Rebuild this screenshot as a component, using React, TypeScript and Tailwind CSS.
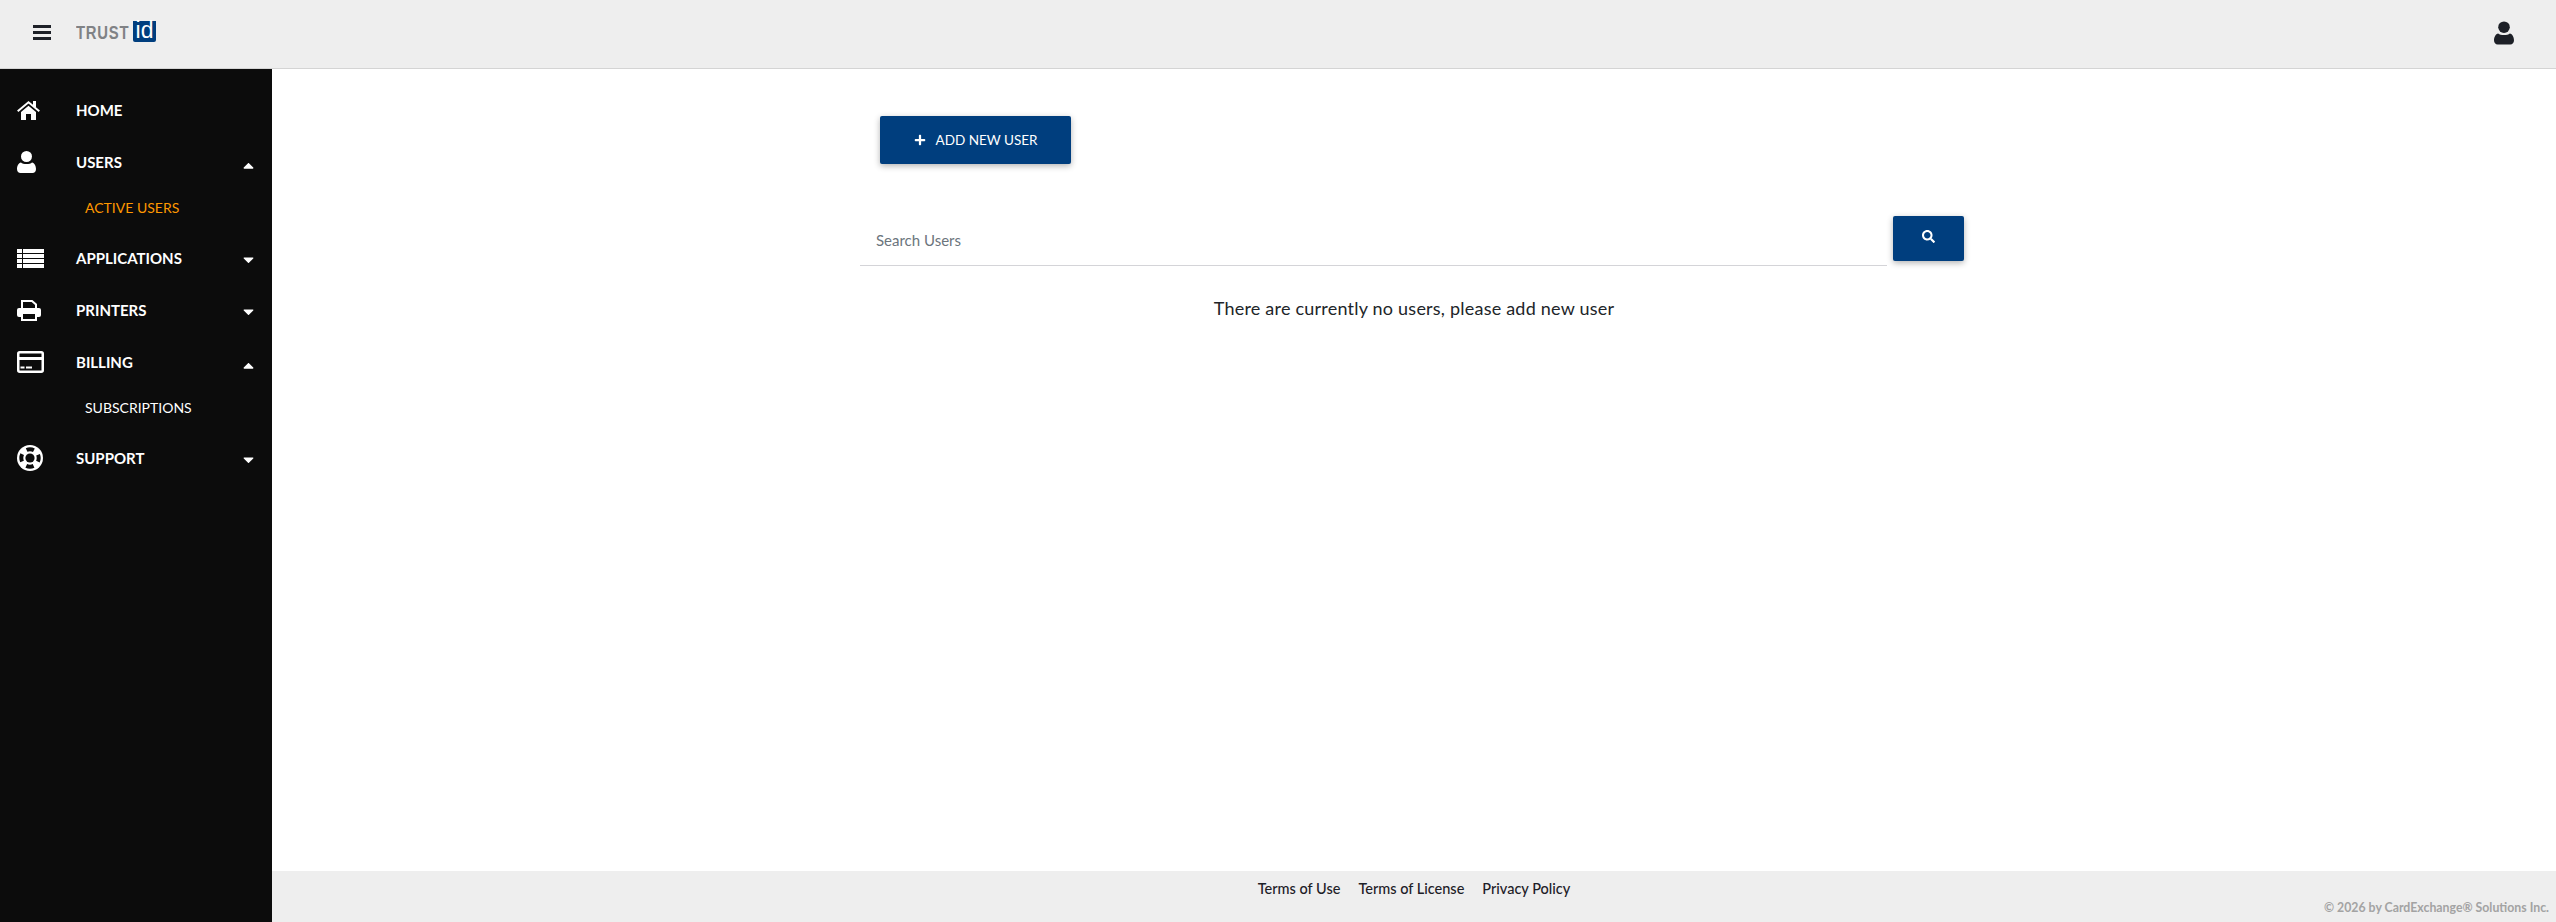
import { FaPlus, FaSearch, FaCaretDown, FaCaretUp } from "react-icons/fa";
import type { ReactNode } from "react";

function MenuIcon() {
    return (
        <svg width="18" height="15" viewBox="0 0 18 15" fill="#1d2027">
            <rect y="0" width="18" height="3" />
            <rect y="6" width="18" height="3" />
            <rect y="12" width="18" height="3" />
        </svg>
    );
}

function UserIcon({ w, h, color }: { w: number; h: number; color: string }) {
    return (
        <svg width={w} height={h} viewBox="0 0 19 22" fill={color}>
            <circle cx="9.5" cy="5.5" r="5.5" />
            <path d="M4 11.5C6 13.5 13 13.5 15 11.5C17.5 12 19 15 19 18C19 20.5 17.5 22 15.5 22H3.5C1.5 22 0 20.5 0 18C0 15 1.5 12 4 11.5Z" />
        </svg>
    );
}

function HomeIcon() {
    return (
        <svg width="23" height="19" viewBox="0 0 23 19" fill="white">
            <rect x="16" y="0" width="3" height="6" />
            <path d="M0.7 10.2L11.5 1.3L22.3 10.2" fill="none" stroke="white" strokeWidth="2" />
            <path d="M4 11L11.5 4.8L19 11V19H14V13H9V19H4Z" />
        </svg>
    );
}

function ListIcon() {
    return (
        <svg width="27" height="21" viewBox="0 0 27 21" fill="white">
            <rect x="0" y="1" width="5" height="4" />
            <rect x="6" y="1" width="21" height="4" />
            <rect x="0" y="6" width="5" height="4" />
            <rect x="6" y="6" width="21" height="4" />
            <rect x="0" y="11" width="5" height="4" />
            <rect x="6" y="11" width="21" height="4" />
            <rect x="0" y="16" width="5" height="4" />
            <rect x="6" y="16" width="21" height="4" />
        </svg>
    );
}

function PrinterIcon() {
    return (
        <svg width="24" height="21" viewBox="0 0 24 21">
            <path d="M5 9V1H15L19 4.5V9" fill="none" stroke="white" strokeWidth="2" />
            <rect x="0" y="8" width="24" height="9" rx="2" fill="white" />
            <rect x="5" y="13" width="14" height="7" fill="#0c0c0c" stroke="white" strokeWidth="2" />
        </svg>
    );
}

function CardIcon() {
    return (
        <svg width="27" height="22" viewBox="0 0 27 22">
            <rect x="1.25" y="1.25" width="24.5" height="19.5" rx="1.5" fill="#0c0c0c" stroke="white" strokeWidth="2.5" />
            <rect x="2" y="6" width="23" height="3" fill="white" />
            <rect x="3.5" y="15.5" width="4" height="2" fill="white" />
            <rect x="9" y="15.5" width="6" height="2" fill="white" />
        </svg>
    );
}

function RingIcon() {
    return (
        <svg width="26" height="26" viewBox="0 0 26 26">
            <circle cx="13" cy="13" r="13" fill="white" />
            <circle cx="13" cy="13" r="8.7" fill="none" stroke="#0c0c0c" strokeWidth="4" strokeDasharray="7.5 6.17" strokeDashoffset="3.75" />
            <circle cx="13" cy="13" r="4.6" fill="#0c0c0c" />
        </svg>
    );
}

function NavItem({ icon, label, open }: { icon: ReactNode; label: string; open?: boolean }) {
    return (
        <div className="flex h-[52px] items-center pl-[17px] pr-[15px] text-white">
            <span className="flex w-[59px] shrink-0 items-center">{icon}</span>
            <span className="flex-1 text-[15px] font-bold">{label}</span>
            {open === undefined ? null : open ? (
                <FaCaretUp className="translate-y-[3px] text-[17px]" />
            ) : (
                <FaCaretDown className="translate-y-[1px] text-[17px]" />
            )}
        </div>
    );
}

function SubItem({ label, active }: { label: string; active?: boolean }) {
    return (
        <div className={`flex h-11 items-start pl-[85px] pt-[9px] text-[14px] ${active ? "text-[#ff9800]" : "text-white"}`}>
            {label}
        </div>
    );
}

export default function App() {
    return (
        <div className="flex h-screen flex-col font-['Lato','Open_Sans',sans-serif] text-[#212529]">

            {/* Header */}
            <header className="flex h-[69px] shrink-0 items-center border-b border-[#d4d4d4] bg-[#eeeeee] pl-[33px] pr-[42px]">
                <div className="-translate-y-[2px]"><MenuIcon /></div>
                <div className="ml-[25px] flex items-start -translate-y-[2px]">
                    <span className="mt-[1px] w-[53px] origin-left scale-x-[0.78] font-['Liberation_Sans',sans-serif] text-[19px] leading-[21px] font-bold tracking-[1px] whitespace-nowrap text-[#808285]">TRUST</span>
                    <span className="ml-[4px] flex h-[21px] w-[23px] items-start justify-center rounded-b-[2px] bg-[#003e7e] font-['Liberation_Sans',sans-serif] text-[23px] leading-[19px] text-white">id</span>
                </div>
                <div className="ml-auto -translate-y-[1px]"><UserIcon w={20} h={24} color="#1d2027" /></div>
            </header>

            <div className="flex min-h-0 flex-1">

                {/* Sidebar */}
                <aside className="w-[272px] shrink-0 bg-[#0c0c0c] pt-[15px]">
                    <NavItem icon={<HomeIcon />} label="HOME" />
                    <NavItem icon={<UserIcon w={19} h={22} color="white" />} label="USERS" open />
                    <SubItem label="ACTIVE USERS" active />
                    <NavItem icon={<ListIcon />} label="APPLICATIONS" open={false} />
                    <NavItem icon={<PrinterIcon />} label="PRINTERS" open={false} />
                    <NavItem icon={<CardIcon />} label="BILLING" open />
                    <SubItem label="SUBSCRIPTIONS" />
                    <NavItem icon={<RingIcon />} label="SUPPORT" open={false} />
                </aside>

                {/* Main */}
                <div className="flex min-w-0 flex-1 flex-col">
                    <main className="mx-auto w-[1108px] flex-1 pt-[47px]">
                        <button className="ml-5 flex h-12 w-[191px] items-center justify-center gap-[10px] rounded-[2px] bg-[#003e7e] text-[13.5px] text-white shadow-[0_2px_6px_rgba(0,0,0,0.3)]">
                            <FaPlus className="text-[12px]" />
                            ADD NEW USER
                        </button>

                        <div className="mt-[52px] flex items-start">
                            <div className="flex h-[50px] w-[1027px] items-center border-b border-[#d4d4d8] pl-4 text-[15px] text-[#6c757d]">
                                Search Users
                            </div>
                            <button className="ml-[6px] flex h-[45px] w-[71px] items-start justify-center rounded-[2px] bg-[#003e7e] pt-[14px] text-white shadow-[0_2px_6px_rgba(0,0,0,0.3)]">
                                <FaSearch className="text-[13px]" />
                            </button>
                        </div>

                        <p className="mt-[29px] text-center text-[18px] tracking-[0.22px]">There are currently no users, please add new user</p>
                    </main>

                    {/* Footer */}
                    <footer className="relative h-[51px] shrink-0 bg-[#eeeeee]">
                        <div className="flex justify-center gap-[18px] pt-[7px] text-[14.5px] font-medium text-[#1d2027]">
                            <a>Terms of Use</a>
                            <a>Terms of License</a>
                            <a>Privacy Policy</a>
                        </div>
                        <span className="absolute right-[7px] bottom-[5px] text-[12.3px] font-bold text-[#a3a3a3]">© 2026 by CardExchange® Solutions Inc.</span>
                    </footer>
                </div>
            </div>
        </div>
    );
}
